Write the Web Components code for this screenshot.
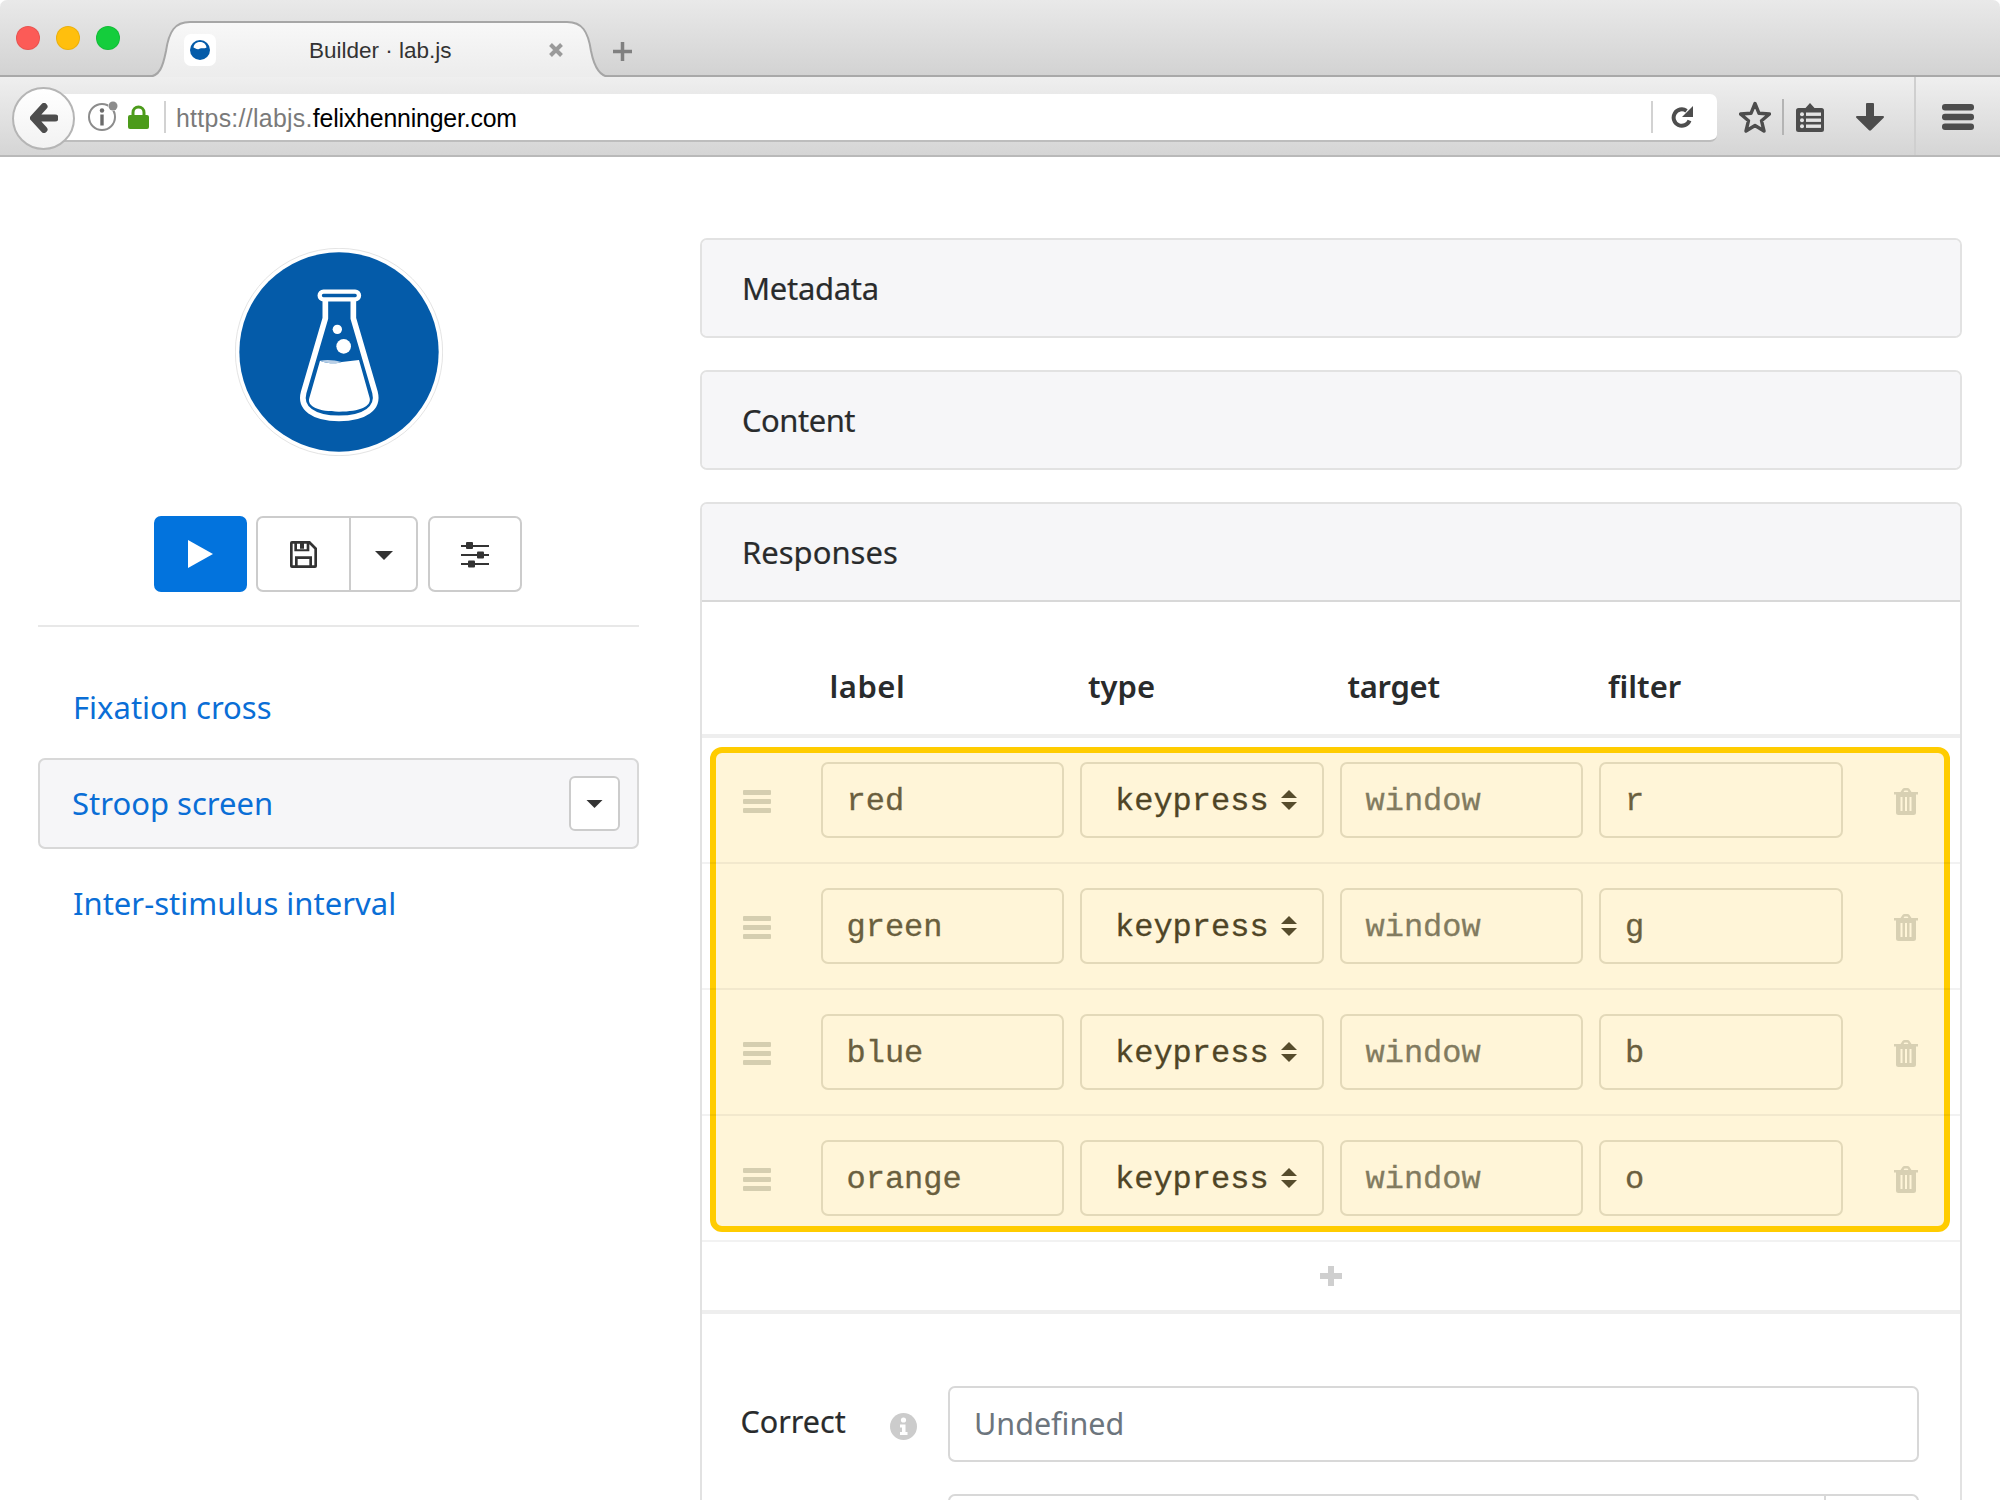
<!DOCTYPE html>
<html lang="en"><head><meta charset="utf-8"><title>Builder · lab.js</title>
<style>
html,body{margin:0;padding:0;background:#fff;height:1500px;overflow:hidden}
body{font-family:"Noto Sans",sans-serif;color:#292b2c}
lab-main{display:grid;grid-template-columns:601px 1262.5px;column-gap:60.5px;padding:81px 0 0 38px;height:1343px;box-sizing:border-box;overflow:hidden}
</style></head><body>
<browser-chrome></browser-chrome>
<lab-main>
  <lab-sidebar></lab-sidebar>
  <lab-editor></lab-editor>
</lab-main>
<script>
function def(name,html){
  customElements.define(name,class extends HTMLElement{
    constructor(){super();this.attachShadow({mode:'open'});}
    connectedCallback(){
      const get=(k,d='')=>this.hasAttribute(k)?this.getAttribute(k):d;
      this.shadowRoot.innerHTML=typeof html==='function'?html(get):html;
    }
  });
}
const caret=(w,h)=>`<svg width="${w}" height="${h}" viewBox="0 0 18 9"><path d="M0 0H18L9 9Z" fill="#333"/></svg>`;

def('browser-chrome',`<style>
:host{display:block;height:157px;font-family:"Liberation Sans",sans-serif}
.tabs{height:77px;box-sizing:border-box;display:flex;background:linear-gradient(#e9e9e9,#d2d2d2);border-radius:7px 7px 0 0;position:relative;box-shadow:inset 0 -2px 0 #a9a9a9}
.lights{display:flex;gap:16px;padding:26px 0 0 16px}
.lights i{width:24px;height:24px;border-radius:50%;box-sizing:border-box;border:1px solid rgba(0,0,0,.08)}
.tab{position:relative;margin:21px 0 0 10px;width:490px;height:58px;display:flex;align-items:center;box-sizing:border-box}
.tab>svg.shape{position:absolute;left:0;top:0}
.fav{position:relative;margin-left:54px;width:32px;height:32px;background:#fff;border-radius:7px;display:flex;align-items:center;justify-content:center}
.title{position:relative;margin-left:93px;width:200px;font-size:22.5px;color:#333;line-height:30px;white-space:nowrap;margin-top:1px}
.x{position:relative;margin-left:39px}
.bar{height:80px;box-sizing:border-box;display:flex;align-items:center;padding:4px 0 0 12px;background:linear-gradient(#efefef,#d5d5d5);border-bottom:2px solid #b9b9b9;position:relative}
.back{position:relative;z-index:1;width:63px;height:63px;box-sizing:border-box;border-radius:50%;background:linear-gradient(#fff,#f2f2f2);border:2px solid #b5b5b5;display:flex;align-items:center;justify-content:center;flex:none}
.url{margin-left:-15px;width:1657px;height:48px;box-sizing:border-box;background:#fff;border-radius:0 7px 7px 0;border-bottom:2px solid #bdbdbd;display:flex;align-items:center;padding-left:26px;flex:none}
.sep{width:2px;height:32px;background:#d2d2d2;flex:none}
.addr{font-size:24.85px;color:#7a7a7a;margin:4px 0 0 10px;white-space:nowrap;letter-spacing:.3px}
.addr b{font-weight:400;color:#000;letter-spacing:-.17px}
.sp{flex:1}
.ic{flex:none;display:block}
.vdiv{width:2px;height:78px;background:#cfcfcf;flex:none;margin:-4px 0 0 30px}
</style>
<div class="tabs">
 <div class="lights"><i style="background:#fc5b57"></i><i style="background:#ffbf0d"></i><i style="background:#14cd3c"></i></div>
 <div class="tab">
  <svg class="shape" width="490" height="58"><defs><linearGradient id="t" x1="0" y1="0" x2="0" y2="1"><stop offset="0" stop-color="#f8f8f8"/><stop offset="1" stop-color="#ececec"/></linearGradient></defs>
   <path d="M0 58V56H17C30 56 33 45 36 30C39 10 45 1 60 1H437C452 1 458 10 461 30C464 45 470 56 480 56H490V58Z" fill="url(#t)"/>
   <path d="M0 56H17C30 56 33 45 36 30C39 10 45 1 60 1H437C452 1 458 10 461 30C464 45 470 56 480 56H490" fill="none" stroke="#a6a6a6" stroke-width="2"/></svg>
  <div class="fav"><svg width="22" height="22" viewBox="0 0 22 22"><circle cx="11" cy="11" r="10" fill="#045ba9"/><path d="M4.500 8.500C5 4.500 8 3 11 3s6 1.500 6.500 5.500C15 10 13 8.500 10 10 8 10.800 6 9 4.500 8.500Z" fill="#fff"/></svg></div>
  <div class="title">Builder · lab.js</div>
  <svg class="x" width="16" height="16" viewBox="0 0 16 16"><path d="M2.500 2.500L13.500 13.500M13.500 2.500L2.500 13.500" stroke="#9a9a9a" stroke-width="4"/></svg>
 </div>
 <svg width="21" height="21" viewBox="0 0 21 21" style="margin:41px 0 0 -8px;flex:none"><path d="M10.500 1V20M1 10.500H20" stroke="#808080" stroke-width="3.500"/></svg>
</div>
<div class="bar">
 <div class="back"><svg width="28" height="30" viewBox="0 0 28 30"><path d="M14 3.500L3.500 15L14 26.500M5 15H25" fill="none" stroke="#4d4d4d" stroke-width="7" stroke-linejoin="round" stroke-linecap="round"/></svg></div>
 <div class="url">
  <svg class="ic" width="34" height="34" viewBox="0 0 34 34"><circle cx="16" cy="17" r="13" fill="none" stroke="#8c8c8c" stroke-width="2"/><circle cx="16" cy="10.500" r="2.200" fill="#6b6b6b"/><rect x="14.300" y="14.500" width="3.400" height="11" fill="#6b6b6b"/><circle cx="27" cy="6" r="5" fill="#fff"/><circle cx="27" cy="6" r="4.500" fill="#8c8c8c"/></svg>
  <svg class="ic" width="21" height="24" viewBox="0 0 21 24" style="margin-left:8px"><path d="M5 11V7.500a5.500 5.500 0 0 1 11 0V11" fill="none" stroke="#4c9b1b" stroke-width="3"/><rect x="0" y="10" width="21" height="14" rx="2" fill="#4c9b1b"/></svg>
  <span class="sep" style="margin-left:15px"></span>
  <span class="addr">https://labjs.<b>felixhenninger.com</b></span>
  <span class="sp"></span>
  <span class="sep"></span>
  <svg class="ic" width="24" height="24" viewBox="0 0 24 24" style="margin:0 22px 0 18px"><path d="M18.500 15.500A8.200 8.200 0 1 1 15.500 5.800" fill="none" stroke="#4d4d4d" stroke-width="4"/><path d="M22 1V12H11Z" fill="#4d4d4d"/></svg>
 </div>
 <svg class="ic" width="32" height="32" viewBox="0 0 32 32" style="margin:-2px 0 0 22px"><path d="M16 2.500L20 12.300 30.500 13 22.500 19.700 25 30 16 24.500 7 30 9.500 19.700 1.500 13 12 12.300Z" fill="none" stroke="#4d4d4d" stroke-width="3.400" stroke-linejoin="round"/></svg>
 <span class="sep" style="margin:-2px 0 0 11px;height:36px;background:#b4b4b4"></span>
 <svg class="ic" width="28" height="29" viewBox="0 0 28 29" style="margin:-2px 0 0 12px"><path d="M2.500 5H9.500L14 0l4.500 5H25.500A2.500 2.500 0 0 1 28 7.500V26.500A2.500 2.500 0 0 1 25.500 29H2.500A2.500 2.500 0 0 1 0 26.500V7.500A2.500 2.500 0 0 1 2.500 5Z" fill="#4d4d4d"/><g fill="#e4e4e4"><rect x="10" y="9.500" width="15" height="3.400"/><rect x="10" y="15.500" width="15" height="3.400"/><rect x="10" y="21.500" width="15" height="3.400"/><circle cx="6" cy="11.200" r="2"/><circle cx="6" cy="17.200" r="2"/><circle cx="6" cy="23.200" r="2"/></g></svg>
 <svg class="ic" width="28" height="28" viewBox="0 0 28 28" style="margin:-2px 0 0 32px"><path d="M10 1a1 1 0 0 1 1-1H17a1 1 0 0 1 1 1V13H27a1 1 0 0 1 .700 1.700L15 27.300a1.500 1.500 0 0 1-2 0L.300 14.700A1 1 0 0 1 1 13H10Z" fill="#4d4d4d"/></svg>
 <span class="vdiv"></span>
 <svg class="ic" width="32" height="26" viewBox="0 0 32 26" style="margin:-3px 0 0 26px"><rect width="32" height="6.500" rx="3" fill="#4d4d4d"/><rect y="9.800" width="32" height="6.500" rx="3" fill="#4d4d4d"/><rect y="19.500" width="32" height="6.500" rx="3" fill="#4d4d4d"/></svg>
</div>`);

def('lab-logo',`<style>:host{display:block;width:208px;height:208px;margin:10px auto 0}svg{display:block}</style>
<svg width="208" height="208" viewBox="285 55 624 624">
<circle cx="597" cy="367" r="311" fill="#fff" stroke="#e4e4e4" stroke-width="3"/>
<circle cx="597" cy="367" r="299" fill="#045ba9"/>
<rect x="539" y="186" width="118" height="23" rx="11.500" fill="none" stroke="#fff" stroke-width="13"/>
<path d="M556 211V266L491 488C478 535 520 566 597 566C675 566 717 535 705 488L640 266V211" fill="none" stroke="#fff" stroke-width="17" stroke-linejoin="round"/>
<path d="M540 393C565 403 590 403 605 397L657 391L689 505C695 530 660 546 597 546C535 546 500 530 508 505Z" fill="#fff"/>
<path d="M540 393C565 403 590 403 605 397C585 391 560 389 540 393Z" fill="#b9cfe6"/>
<circle cx="592" cy="299" r="14" fill="#fff"/><circle cx="611" cy="350" r="22" fill="#fff"/>
</svg>`);

def('lab-actions',`<style>
:host{display:flex;justify-content:center;gap:9px;margin:60px 0 0 -1px;height:76px}
.b{box-sizing:border-box;height:76px;border:2px solid #ccc;border-radius:7px;background:#fff;display:flex;align-items:center;justify-content:center}
.play{width:93px;background:#0273dd;border-color:#0273dd}
.group{display:flex;width:162px;border:2px solid #ccc;border-radius:7px;box-sizing:border-box;height:76px}
.group div{display:flex;align-items:center;justify-content:center}
.group .l{width:91px;border-right:2px solid #ccc}.group .r{flex:1;padding-top:2px}
.set{width:94px;margin-left:1px;padding-top:1px}
</style>
<div class="b play"><svg width="25" height="28" viewBox="0 0 25 28"><path d="M0 0L25 14L0 28Z" fill="#fff"/></svg></div>
<div class="group"><div class="l"><svg width="27" height="27" viewBox="0 0 81 81"><path fill-rule="evenodd" fill="#333" d="M6 0H60L81 21V75a6 6 0 0 1-6 6H6a6 6 0 0 1-6-6V6a6 6 0 0 1 6-6ZM8 8V73H15V46H66V73H73V25L58 10V31H13V8ZM23 54V73H58V54ZM21 8V25H50V8H42V23H30V8Z"/></svg></div><div class="r">${caret(18,9)}</div></div>
<div class="b set"><svg width="28" height="26" viewBox="0 0 28 26"><g stroke="#333" stroke-width="2"><path d="M0 4H28M0 13H28M0 22H28"/></g><g fill="#333"><rect x="5" y="0" width="7" height="7" rx="1"/><rect x="16" y="9.500" width="7" height="7" rx="1"/><rect x="7" y="18.500" width="7" height="7" rx="1"/></g></svg></div>`);

def('lab-nav-item',g=>`<style>
:host{display:block}
.i{box-sizing:border-box;height:91px;display:flex;align-items:center;padding:0 17px 0 33px;border:2px solid transparent;border-radius:7px;font-size:31px;color:#0a6ed6;white-space:nowrap}
:host([active]) .i{background:#f6f6f8;border-color:#d8d8d8;padding-left:32px}
:host([active]) span{padding-bottom:2px}
span{flex:1}
.d{flex:none;box-sizing:border-box;width:51px;height:55px;background:#fff;border:2px solid #ccc;border-radius:6px;display:flex;align-items:center;justify-content:center}
</style><div class="i"><span><slot></slot></span>${g('active',null)!==null?`<div class="d">${caret(17,8)}</div>`:''}</div>`);

def('lab-sidebar',`<style>
:host{display:block}
hr{border:0;height:2px;background:#e8e8e8;margin:33px 0 34.5px}
nav{display:flex;flex-direction:column}
nav :nth-child(1){margin-bottom:5.5px}
nav :nth-child(3){margin-top:8px}
</style>
<lab-logo></lab-logo>
<lab-actions></lab-actions>
<hr>
<nav>
 <lab-nav-item>Fixation cross</lab-nav-item>
 <lab-nav-item active>Stroop screen</lab-nav-item>
 <lab-nav-item>Inter-stimulus interval</lab-nav-item>
</nav>`);

def('lab-panel',g=>`<style>
:host{display:block;box-sizing:border-box;border:2px solid #e2e2e2;border-radius:7px;overflow:hidden}
.h{box-sizing:border-box;background:#f6f6f8;height:96px;padding-left:40.5px;display:flex;align-items:center;font-size:31px;color:#292b2c;letter-spacing:${g('ls','0')}px;-webkit-text-stroke:.2px currentColor}
:host([open]){border-radius:7px 7px 0 0;border-bottom:0}
:host([open]) .h{height:98px;border-bottom:2px solid #d8d8d8}
</style><div class="h">${g('heading')}</div><slot></slot>`);

def('response-head',`<style>
:host{display:grid;grid-template-columns:103px repeat(4,243.5px);column-gap:16px;box-sizing:border-box;height:136px;padding-top:36px;align-items:center;border-bottom:4px solid #eee;font-weight:600;font-size:31px;color:#292b2c;font-family:"Noto Sans",sans-serif}
span{padding-left:8px}
</style><i></i><span style="letter-spacing:.5px;padding-left:9px">label</span><span>type</span><span style="letter-spacing:-.3px">target</span><span style="padding-left:9px">filter</span>`);

def('response-row',g=>`<style>
:host{display:grid;grid-template-columns:103px repeat(4,243.5px) 1fr;column-gap:16px;box-sizing:border-box;height:126px;padding:24px 0;border-bottom:2px solid rgba(0,0,0,.05);position:relative;align-items:center;font-family:"Liberation Mono",monospace;font-size:32px}
.hd{padding:3px 0 0 41px}
.f{box-sizing:border-box;height:76px;border:2px solid #e3d9b9;border-radius:7px;display:flex;align-items:center;padding:3px 24px 0 24px;color:#6a5f3e;-webkit-text-stroke:.3px currentColor}
.s{color:#4f4526;padding-left:33px;justify-content:space-between;padding-right:24px}
.s svg{margin-top:-3px}
.w{color:#827b5f}
.t{padding:3px 0 0 0;justify-self:start;margin-left:35.5px}
svg{display:block}
</style>
<div class="hd"><svg width="28" height="23" viewBox="0 0 28 23" fill="#d5ceb0"><rect width="28" height="5" rx="1"/><rect y="9" width="28" height="5" rx="1"/><rect y="18" width="28" height="5" rx="1"/></svg></div>
<div class="f">${g('label')}</div>
<div class="f s">keypress<svg width="18" height="20" viewBox="0 0 18 20" fill="#564c2c"><path d="M9 0L17 8H1ZM9 20L1 12H17Z"/></svg></div>
<div class="f w">window</div>
<div class="f">${g('filter')}</div>
<div class="t"><svg width="24" height="27" viewBox="0 0 24 27"><path fill="#d8d0b3" fill-rule="evenodd" d="M0 4H6.500L8.500 1A2.500 2.500 0 0 1 10.500 0H13.500A2.500 2.500 0 0 1 15.500 1L17.500 4H24V6.500H22V24.500A2.500 2.500 0 0 1 19.500 27H4.500A2.500 2.500 0 0 1 2 24.500V6.500H0ZM9.500 4H14.500L13.500 2.500H10.500ZM6.500 9V23H8.500V9ZM11 9V23H13V9ZM15.500 9V23H17.500V9Z"/></svg></div>`);

def('response-table',`<style>
:host{display:block}
.list{position:relative}
.hl{position:absolute;left:8px;right:10px;top:9px;bottom:10px;box-sizing:border-box;background:#fff5d8;border:6px solid #ffcc00;border-radius:12px}
.add{height:72px;box-sizing:border-box;border-bottom:4px solid #eee;display:flex;align-items:center;justify-content:center}
</style>
<response-head></response-head>
<div class="list"><div class="hl"></div><slot></slot></div>
<div class="add"><svg width="24" height="22" viewBox="0 0 24 22"><path d="M12 1V21M1 11H23" stroke="#cfcfcf" stroke-width="6"/></svg></div>`);

def('form-row',g=>`<style>
:host{display:flex;align-items:center;height:76px;margin-bottom:32px;font-size:30.5px;color:#292b2c}
.lab{width:187px;padding-left:39px;flex:none;box-sizing:border-box;margin-bottom:7px;-webkit-text-stroke:.2px currentColor}
.inf{width:30px;flex:none;margin-top:4px;display:flex;justify-content:center}
.in{margin-left:29.5px;box-sizing:border-box;width:971px;height:76px;border:2px solid #d8d8d8;border-radius:7px;display:flex;align-items:center;padding:0 0 2px 24px;color:#6c757d;flex:none;position:relative}
.in.extra::after{content:"";position:absolute;right:91px;top:0;bottom:0;width:2px;background:#d8d8d8}
</style><div class="lab">${g('label')}</div><div class="inf">${g('label')?'<svg width="27" height="27" viewBox="0 0 27 27"><circle cx="13.500" cy="13.500" r="13.500" fill="#cccccc"/><circle cx="13.500" cy="7" r="2.600" fill="#fff"/><path d="M10 11.500H15.500V19H17.500V22H10V19H12V14.500H10Z" fill="#fff"/></svg>':''}</div><div class="in ${g('extra',null)!==null?'extra':''}">${g('value')}</div>`);

def('lab-editor',`<style>
:host{display:flex;flex-direction:column;gap:32px}
.form{padding-top:72px}
</style>
<lab-panel heading="Metadata" ls="-.3"></lab-panel>
<lab-panel heading="Content" ls="-.5"></lab-panel>
<lab-panel heading="Responses" open>
 <response-table>
  <response-row label="red" filter="r"></response-row>
  <response-row label="green" filter="g"></response-row>
  <response-row label="blue" filter="b"></response-row>
  <response-row label="orange" filter="o"></response-row>
 </response-table>
 <div class="form">
  <form-row label="Correct" value="Undefined"></form-row>
  <form-row extra></form-row>
 </div>
</lab-panel>`);
</script>
</body></html>
